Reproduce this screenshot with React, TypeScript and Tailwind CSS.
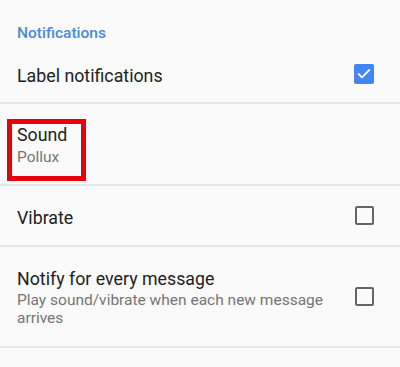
import { Check } from "lucide-react";

function CheckBox({ checked }: { checked: boolean }) {
  if (checked) {
    return (
      <div className="w-[20px] h-[20px] rounded-[2px] bg-[#4285f4] flex items-center justify-center shrink-0">
        <Check className="w-[16px] h-[16px] text-white" strokeWidth={2.75} />
      </div>
    );
  }
  return <div className="w-[19px] h-[19px] rounded-[2px] border-2 border-[#656565] shrink-0" />;
}

export default function App() {
  return (
    <div
      className="w-[400px] h-[367px] bg-[#fafafa] overflow-hidden"
      style={{ fontFamily: "Roboto, 'Noto Sans', sans-serif" }}
    >
      {/* Section header */}
      <div className="h-[46px] pt-[23px] px-[17px]">
        <p className="text-[15.5px] leading-[20px] font-medium text-[#4a8ad6]">Notifications</p>
      </div>

      {/* Label notifications */}
      <div className="h-[58px] flex items-center gap-[12px] pl-[17px] pr-[26px] border-b-2 border-[#e6e6e6]">
        <p className="flex-1 pt-[3px] text-[17.8px] leading-[24px] text-[#212121]">Label notifications</p>
        <CheckBox checked />
      </div>

      {/* Sound */}
      <div className="h-[82px] flex items-center pl-[17px] pr-[26px] border-b-2 border-[#e6e6e6]">
        <div className="relative pt-[2px]">
          <p className="text-[17.8px] leading-[24px] text-[#212121]">Sound</p>
          <p className="text-[15.5px] leading-[20px] text-[#757575]">Pollux</p>
          <span className="absolute left-[-10px] top-[-2px] w-[79px] h-[62px] border-[5px] border-[#e8000b]" />
        </div>
      </div>

      {/* Vibrate */}
      <div className="h-[61px] flex items-center gap-[12px] pl-[17px] pr-[26px] border-b-2 border-[#e6e6e6]">
        <p className="flex-1 pt-[5px] text-[17.8px] leading-[24px] text-[#212121]">Vibrate</p>
        <CheckBox checked={false} />
      </div>

      {/* Notify for every message */}
      <div className="h-[101px] flex items-center gap-[12px] pl-[17px] pr-[26px] border-b-2 border-[#e6e6e6]">
        <div className="flex-1">
          <p className="text-[17.8px] leading-[24px] text-[#212121]">Notify for every message</p>
          <p className="text-[15.5px] leading-[18px] text-[#757575]">
            Play sound/vibrate when each new message arrives
          </p>
        </div>
        <CheckBox checked={false} />
      </div>
    </div>
  );
}
